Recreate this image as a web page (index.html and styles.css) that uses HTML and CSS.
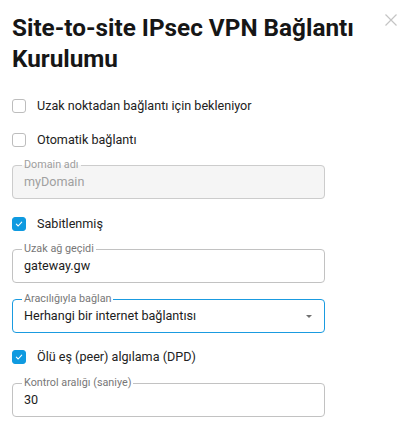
FILE: index.html
```html
<!DOCTYPE html>
<html lang="tr">
<head>
<meta charset="utf-8">
<link rel="stylesheet" href="styles.css">
</head>
<body>
<div class="dialog">
  <div class="header">
    <h1 class="title">Site-to-site IPsec VPN Bağlantı Kurulumu</h1>
    <button class="close" aria-label="Kapat">
      <svg width="12" height="12" viewBox="0 0 12 12"><path d="M0.5 0.5L11.5 11.5M11.5 0.5L0.5 11.5" stroke="#c4c4c4" stroke-width="1.2" fill="none"/></svg>
    </button>
  </div>

  <label class="check-row row-first">
    <span class="box"></span>
    <span class="check-text">Uzak noktadan bağlantı için bekleniyor</span>
  </label>
  <label class="check-row">
    <span class="box"></span>
    <span class="check-text">Otomatik bağlantı</span>
  </label>

  <fieldset class="field field-disabled fs-m2">
    <legend>Domain adı</legend>
    <div class="value">myDomain</div>
  </fieldset>

  <label class="check-row row-after-field">
    <span class="box checked">
      <svg width="10" height="10" viewBox="0 0 10 10"><path d="M2.3 5.2L4.2 7L7.7 3.2" stroke="#fff" stroke-width="1.1" fill="none" stroke-linecap="round" stroke-linejoin="round"/></svg>
    </span>
    <span class="check-text">Sabitlenmiş</span>
  </label>

  <fieldset class="field fs-m2">
    <legend>Uzak ağ geçidi</legend>
    <div class="value">gateway.gw</div>
  </fieldset>

  <fieldset class="field field-focus fs-gap">
    <legend>Aracılığıyla bağlan</legend>
    <div class="value select-value">
      <span>Herhangi bir internet bağlantısı</span>
      <span class="arrow"></span>
    </div>
  </fieldset>

  <label class="check-row row-after-select">
    <span class="box checked">
      <svg width="10" height="10" viewBox="0 0 10 10"><path d="M2.3 5.2L4.2 7L7.7 3.2" stroke="#fff" stroke-width="1.1" fill="none" stroke-linecap="round" stroke-linejoin="round"/></svg>
    </span>
    <span class="check-text">Ölü eş (peer) algılama (DPD)</span>
  </label>

  <fieldset class="field fs-m3">
    <legend>Kontrol aralığı (saniye)</legend>
    <div class="value">30</div>
  </fieldset>
</div>
</body>
</html>
```

FILE: styles.css
```css
html, body {
  margin: 0;
  padding: 0;
  background: #ffffff;
}

body {
  font-family: Roboto, "Liberation Sans", Arial, sans-serif;
  color: #222222;
}

.dialog {
  width: 409px;
  box-sizing: border-box;
  padding: 0 12px;
}

.header {
  display: flex;
  align-items: flex-start;
  gap: 10px;
}

.title {
  flex: 1;
  margin: 12px 0 0 0;
  font-size: 24.3px;
  line-height: 31px;
  font-weight: 700;
  color: #161616;
}

.close {
  border: 0;
  background: none;
  padding: 0;
  margin: 14px 0 0 0;
  width: 12px;
  height: 12px;
  display: flex;
  cursor: pointer;
}

.check-row {
  display: flex;
  align-items: center;
  gap: 11px;
  height: 34px;
  font-size: 12.6px;
  line-height: 18px;
  color: #222222;
}

.row-first {
  margin-top: 15px;
}

.row-after-field {
  margin-top: 8px;
}

.row-after-select {
  margin-top: 7px;
}

.box {
  width: 14px;
  height: 14px;
  box-sizing: border-box;
  border: 1px solid #bdbdbd;
  border-radius: 3px;
  background: #fff;
  display: flex;
  align-items: center;
  justify-content: center;
  flex: none;
}

.box.checked {
  background: #0f9ae0;
  border-color: #0f9ae0;
}

.field {
  margin: 0;
  width: 313px;
  box-sizing: border-box;
  border: 1px solid #c2c2c2;
  border-radius: 4px;
  padding: 1px 11px 6px 11px;
  min-inline-size: 0;
}

.fs-m2 {
  margin-top: 2px;
}

.fs-m3 {
  margin-top: 3px;
}

.fs-gap {
  margin-top: 10px;
}

.field legend {
  font-size: 10.8px;
  line-height: 12px;
  color: #777777;
  padding: 0 2px;
  margin-left: -2px;
}

.value {
  font-size: 12.6px;
  line-height: 20px;
  color: #1c1c1c;
}

.field-disabled {
  background: #f5f5f5;
  border-color: #cccccc;
}

.field-disabled legend {
  color: #9e9e9e;
}

.field-disabled .value {
  color: #a0a0a0;
}

.field-focus {
  border-color: #1a9be0;
}

.select-value {
  display: flex;
  align-items: center;
  justify-content: space-between;
}

.arrow {
  width: 0;
  height: 0;
  border-left: 3px solid transparent;
  border-right: 3px solid transparent;
  border-top: 3.5px solid #707070;
  margin-right: 1px;
}
```
